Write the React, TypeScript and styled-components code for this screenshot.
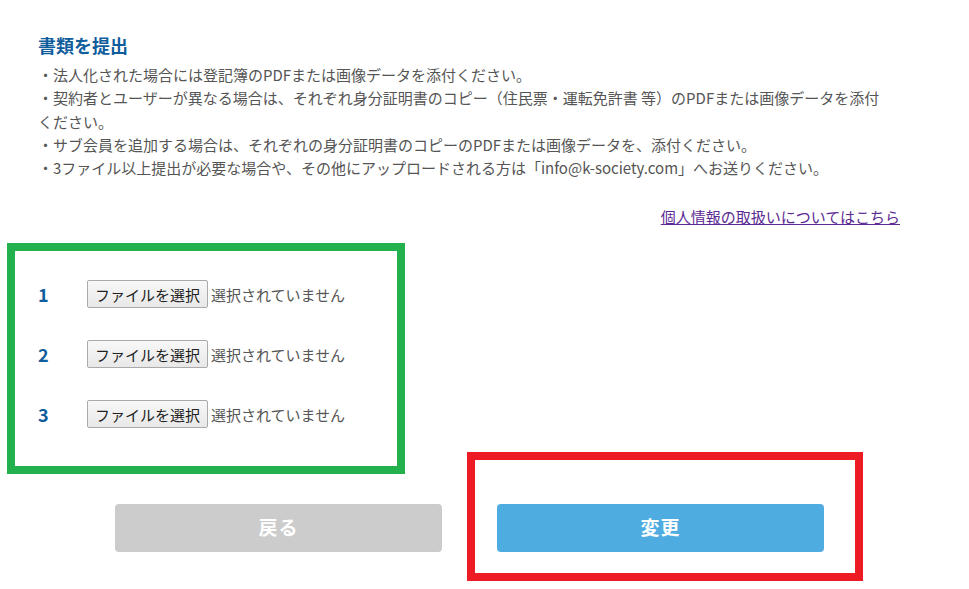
import React from "react";
import styled, { createGlobalStyle } from "styled-components";

const GlobalStyle = createGlobalStyle`
    html, body {
        margin: 0;
        padding: 0;
        background: #fff;
    }
    body {
        font-family: "Noto Sans CJK JP", "Noto Sans", sans-serif;
        color: #555;
    }
`;

const notes = [
    "・法人化された場合には登記簿のPDFまたは画像データを添付ください。",
    "・契約者とユーザーが異なる場合は、それぞれ身分証明書のコピー（住民票・運転免許書 等）のPDFまたは画像データを添付ください。",
    "・サブ会員を追加する場合は、それぞれの身分証明書のコピーのPDFまたは画像データを、添付ください。",
    "・3ファイル以上提出が必要な場合や、その他にアップロードされる方は「info@k-society.com」へお送りください。",
];

const App = () => {
    return (
        <Page>
            <GlobalStyle />
            <Section>
                <Title>書類を提出</Title>
                <Notes>
                    {notes.map((n) => (
                        <Note key={n}>{n}</Note>
                    ))}
                </Notes>
                <LinkRow>
                    <PrivacyLink href="#">個人情報の取扱いについてはこちら</PrivacyLink>
                </LinkRow>
            </Section>
            <UploadFrame>
                {[1, 2, 3].map((no) => (
                    <FileRow key={no}>
                        <RowNumber>{no}</RowNumber>
                        <PickButton type="button">ファイルを選択</PickButton>
                        <FileStatus>選択されていません</FileStatus>
                    </FileRow>
                ))}
            </UploadFrame>
            <ButtonRow>
                <ActionButton bgColor="#cccccc">戻る</ActionButton>
                <SubmitFrame>
                    <ActionButton bgColor="#4eace0">変更</ActionButton>
                </SubmitFrame>
            </ButtonRow>
        </Page>
    );
};

const Page = styled.div`
    width: 969px;
    height: 589px;
    overflow: hidden;
    box-sizing: border-box;
    padding-top: 32px;
`;

const Section = styled.section`
    width: 862px;
    margin-left: 38px;
`;

const Title = styled.h2`
    margin: 0;
    font-size: 18px;
    line-height: 26px;
    font-weight: 700;
    color: #105d9c;
`;

const Notes = styled.div`
    width: 848px;
    margin-top: 5px;
`;

const Note = styled.p`
    margin: 0;
    font-size: 15px;
    line-height: 23.3px;
    color: #555;
`;

const LinkRow = styled.div`
    display: flex;
    justify-content: flex-end;
    margin-top: 27px;
`;

const PrivacyLink = styled.a`
    font-size: 15px;
    line-height: 22px;
    color: #5b2a92;
    text-decoration: underline;
`;

const UploadFrame = styled.div`
    width: 398px;
    height: 231px;
    box-sizing: border-box;
    margin-top: 15px;
    margin-left: 7px;
    border: 8px solid #22b14c;
    padding: 29px 0 0 23px;
    display: flex;
    flex-direction: column;
    gap: 32px;
`;

const FileRow = styled.div`
    display: flex;
    align-items: center;
    height: 28px;
`;

const RowNumber = styled.span`
    width: 49px;
    font-size: 18px;
    font-weight: 700;
    color: #105d9c;
`;

const PickButton = styled.button`
    height: 28px;
    width: 121px;
    padding: 0;
    box-sizing: border-box;
    font-family: inherit;
    font-size: 15px;
    color: #222;
    background: linear-gradient(#f8f8f8, #e8e8e8);
    border: 1px solid #aaa;
    border-radius: 2px;
`;

const FileStatus = styled.span`
    margin-left: 3px;
    font-size: 15px;
    color: #555;
`;

const ButtonRow = styled.div`
    display: flex;
    align-items: flex-start;
    margin-top: -22px;
    margin-left: 115px;
    gap: 25px;

    & > button:first-child {
        margin-top: 52px;
    }
`;

const SubmitFrame = styled.div`
    border: 8px solid #ed1c24;
    padding: 44px 31px 21px 22px;
`;

const ActionButton = styled.button<{ bgColor: string }>`
    width: 327px;
    height: 48px;
    padding: 0 0 4px;
    border: none;
    border-radius: 4px;
    background-color: ${({ bgColor }) => bgColor};
    color: #fff;
    font-family: inherit;
    font-size: 19px;
    font-weight: 700;
    letter-spacing: 1px;
`;

export default App;
